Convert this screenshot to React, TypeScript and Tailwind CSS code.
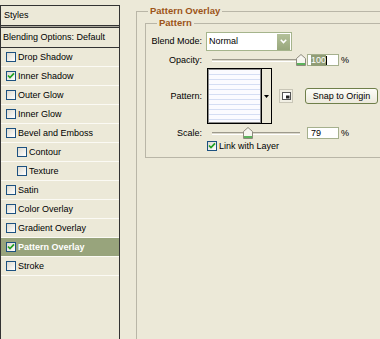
import React from "react";

function Check({ checked }: { checked?: boolean }) {
  return (
    <span className="flex h-[10px] w-[10px] shrink-0 items-center justify-center border border-[#1c5180] bg-[linear-gradient(135deg,#dcdad0,#ffffff)]">
      {checked && (
        <svg width="8" height="8" viewBox="0 0 8 8">
          <path d="M1 3.5 L3 5.6 L7 1.4" stroke="#21a121" strokeWidth="1.7" fill="none" />
        </svg>
      )}
    </span>
  );
}

function Slider({ pos }: { pos: number }) {
  return (
    <div className="relative ml-[6px] flex h-[14px] w-[90px] items-center">
      <div className="h-[3px] w-[88px] border-t border-[#9d9a8c] border-b border-b-white bg-[#dcd9cc]" />
      <svg className="absolute top-[1px]" style={{ left: pos }} width="10" height="12" viewBox="0 0 10 12">
        <path d="M0.5 4.5 L5 0.5 L9.5 4.5 L9.5 11.5 L0.5 11.5 Z" fill="#f7f6f0" stroke="#8d8a7c" />
        <rect x="1" y="9" width="8" height="2" fill="#5db35d" />
      </svg>
    </div>
  );
}

const items: { label: string; checked?: boolean; indent?: boolean; selected?: boolean }[] = [
  { label: "Drop Shadow" },
  { label: "Inner Shadow", checked: true },
  { label: "Outer Glow" },
  { label: "Inner Glow" },
  { label: "Bevel and Emboss" },
  { label: "Contour", indent: true },
  { label: "Texture", indent: true },
  { label: "Satin" },
  { label: "Color Overlay" },
  { label: "Gradient Overlay" },
  { label: "Pattern Overlay", checked: true, selected: true },
  { label: "Stroke" },
];

export default function App() {
  return (
    <div className="flex h-[339px] w-[380px] overflow-hidden bg-[#ece9d8] font-['Liberation_Sans',Arial,sans-serif] text-[9px] leading-[11px] text-black">
      {/* Left styles list */}
      <div className="mt-[5px] h-[400px] w-[120px] shrink-0 border border-b-0 border-[#333]">
        <div className="flex h-[19px] items-center pl-[3px]">Styles</div>
        <div className="h-[3px] border-y border-[#333] bg-[#a9a79b]" />
        <div className="flex h-[20px] items-center border-b border-[#333] pl-[2px]">Blending Options: Default</div>
        {items.map((it) => (
          <div
            key={it.label}
            className={
              "flex h-[19px] items-center gap-[2px] border-b border-[#fbfaf4] " +
              (it.indent ? "pl-[16px] " : "pl-[5px] ") +
              (it.selected ? "bg-[#98a47c] font-bold text-white" : "")
            }
          >
            <Check checked={it.checked} />
            <span>{it.label}</span>
          </div>
        ))}
      </div>

      {/* Right panel */}
      <fieldset className="ml-[16px] mt-[5px] h-[400px] w-[260px] shrink-0 border border-[#b9b6a7]">
        <legend className="ml-[11px] px-[2px] text-[9.5px] font-bold leading-[12px] text-[#9c5418]">Pattern Overlay</legend>
        <fieldset className="ml-[8px] border border-[#b9b6a7] pb-[5px] pt-[3px]">
          <legend className="ml-[11px] px-[2px] text-[9.5px] font-bold leading-[12px] text-[#9c5418]">Pattern</legend>

          {/* Blend mode */}
          <div className="flex h-[19px] items-center">
            <div className="w-[56px] text-right">Blend Mode:</div>
            <div className="ml-[4px] flex h-[19px] w-[86px] items-center border border-[#a5b48c] bg-white pl-[2px]">
              <span className="flex-1">Normal</span>
              <span className="mr-[1px] flex h-[16px] w-[13px] items-center justify-center bg-[linear-gradient(#b4c19a,#98a77c)]">
                <svg width="7" height="5" viewBox="0 0 7 5">
                  <path d="M0.8 0.8 L3.5 3.6 L6.2 0.8" stroke="#fff" strokeWidth="1.5" fill="none" />
                </svg>
              </span>
            </div>
          </div>

          {/* Opacity */}
          <div className="mt-[2px] flex h-[14px] items-center">
            <div className="w-[56px] text-right">Opacity:</div>
            <div className="ml-[4px]" />
            <Slider pos={84} />
            <div className="ml-[5px] flex h-[12px] w-[32px] items-center border border-[#a5b08d] bg-white pl-[3px]">
              <span className="bg-[#919d76] text-white">100</span>
              <span className="h-[9px] w-px bg-black" />
            </div>
            <span className="ml-[2px]">%</span>
          </div>

          {/* Pattern */}
          <div className="mt-[1px] flex items-center">
            <div className="w-[56px] text-right">Pattern:</div>
            <div className="ml-[5px] flex h-[56px] border border-black">
              <div className="w-[53px] border border-[#8c8c8c] bg-[repeating-linear-gradient(to_bottom,#fbfbff_0px,#fbfbff_4px,#d5def4_4px,#d5def4_5px)]" />
              <div className="flex w-[10px] items-center justify-center border-l border-black">
                <svg width="5" height="3" viewBox="0 0 5 3">
                  <path d="M0 0 L5 0 L2.5 3 Z" fill="#000" />
                </svg>
              </div>
            </div>
            <div className="ml-[7px] flex h-[14px] w-[14px] items-center justify-center border border-[#c9c6b7] bg-[#f1efe4]">
              <svg width="9" height="8" viewBox="0 0 9 8">
                <rect x="0.5" y="0.5" width="8" height="7" fill="#fff" stroke="#555" />
                <rect x="4" y="3.5" width="3.5" height="3" fill="#222" />
              </svg>
            </div>
            <div className="ml-[12px] flex h-[16px] w-[73px] items-center justify-center rounded-[3px] border border-[#6f7f4a] bg-[linear-gradient(#fdfdf8,#ece9dc)]">
              Snap to Origin
            </div>
          </div>

          {/* Scale */}
          <div className="mt-[2px] flex h-[14px] items-center">
            <div className="w-[56px] text-right">Scale:</div>
            <div className="ml-[4px]" />
            <Slider pos={31} />
            <div className="ml-[5px] flex h-[12px] w-[32px] items-center border border-[#a5b08d] bg-white pl-[3px]">79</div>
            <span className="ml-[2px]">%</span>
          </div>

          {/* Link */}
          <div className="flex h-[12px] items-center">
            <div className="w-[56px]" />
            <div className="ml-[5px] flex items-center gap-[2px]">
              <Check checked />
              <span>Link with Layer</span>
            </div>
          </div>
        </fieldset>
      </fieldset>
    </div>
  );
}
